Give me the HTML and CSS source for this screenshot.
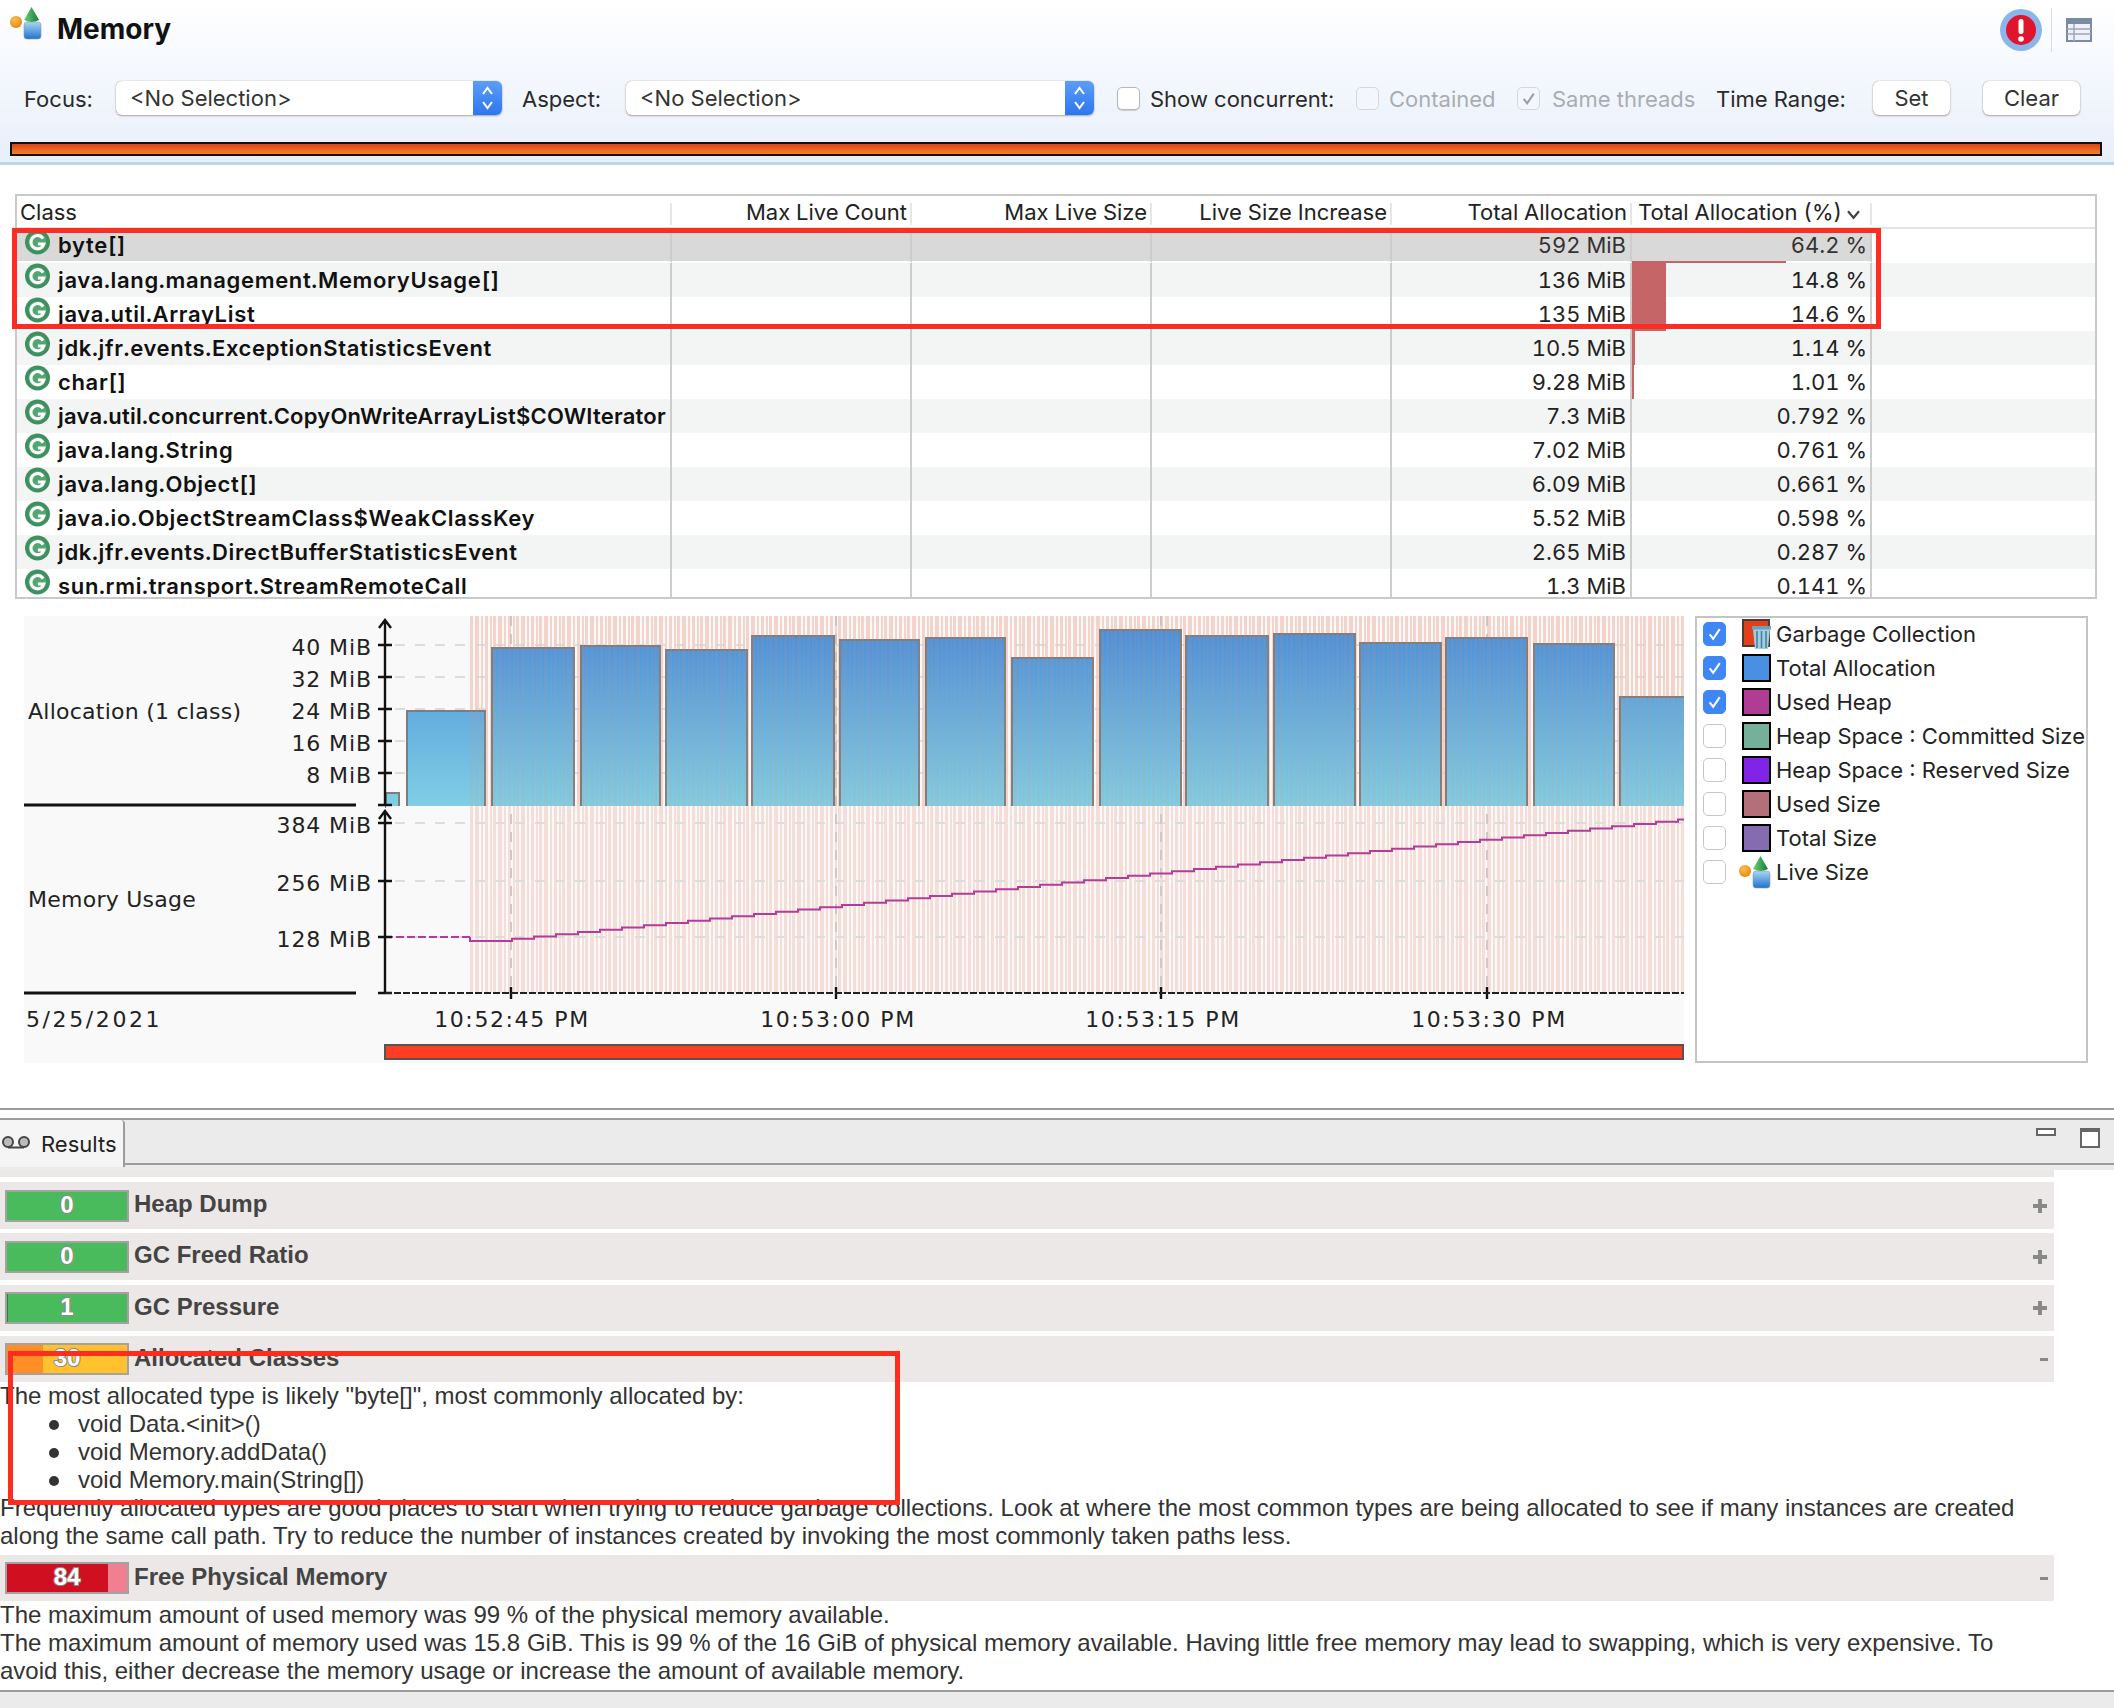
FILE: index.html
```html
<!DOCTYPE html>
<html lang="en">
<head>
    <meta charset="UTF-8">
    <title>Memory</title>
    <link rel="stylesheet" href="styles.css">
</head>
<body>
<svg class="defs" width="0" height="0">
    <defs>
        <radialGradient id="ball" cx="40%" cy="35%" r="70%"><stop offset="0" stop-color="#ffc24a"/><stop offset="1" stop-color="#e8820f"/></radialGradient>
        <linearGradient id="cup" x1="0" y1="0" x2="0" y2="1"><stop offset="0" stop-color="#a9d6f5"/><stop offset="1" stop-color="#1f73cf"/></linearGradient>
        <linearGradient id="cone" x1="0" y1="0" x2="1" y2="0"><stop offset="0" stop-color="#6fd07a"/><stop offset="1" stop-color="#137a3a"/></linearGradient>
        <symbol id="memIcon" viewBox="0 0 34 34">
            <circle cx="7" cy="16" r="6" fill="url(#ball)"/>
            <rect x="15" y="16" width="17" height="17" rx="3" fill="url(#cup)" stroke="#8a9aa8" stroke-width=".6"/>
            <path d="M22.500 1 L30 14 Q22.500 18 15 14 Z" fill="url(#cone)"/>
        </symbol>
        <symbol id="classIcon" viewBox="0 0 26 26">
            <circle cx="13" cy="13" r="12.500" fill="#3f9060"/>
            <circle cx="13" cy="13" r="9" fill="#52a672"/>
            <path d="M18.600 9.600 A6.600 6.600 0 1 0 19.400 15 L13.400 15" fill="none" stroke="#fff" stroke-width="3"/>
        </symbol>
        <symbol id="check" viewBox="0 0 24 24">
            <path d="M6.500 12.500 L10.500 17.500 L18 6.500" fill="none" stroke="currentColor" stroke-width="2.400"/>
        </symbol>
        <symbol id="stepper" viewBox="0 0 29 34">
            <path d="M10 13 L14.500 7 L19 13 M10 21 L14.500 27 L19 21" fill="none" stroke="#fff" stroke-width="2"/>
        </symbol>
    </defs>
</svg>

<div class="page">
    <header class="header">
        <div class="title-row">
            <svg class="title-icon"><use href="#memIcon"/></svg>
            <h1 class="title">Memory</h1>
            <svg class="alert-icon" viewBox="0 0 44 44">
                <circle cx="22" cy="22" r="21" fill="#8ab6ec"/>
                <circle cx="22" cy="22" r="15" fill="#e0142c"/>
                <rect x="19.500" y="11" width="5" height="15" rx="2.500" fill="#fff"/>
                <circle cx="22" cy="31" r="2.800" fill="#fff"/>
            </svg>
            <span class="title-sep"></span>
            <svg class="table-icon" viewBox="0 0 26 24">
                <rect x="1" y="1" width="24" height="22" fill="#eef1f6" stroke="#7a8aa5" stroke-width="2"/>
                <rect x="1" y="1" width="24" height="5" fill="#7a8aa5"/>
                <path d="M1 11h24M1 16h24M8 6v17" stroke="#9aa7bd" stroke-width="1.500"/>
            </svg>
        </div>
        <div class="filter-row">
            <span class="lbl lbl-focus">Focus:</span>
            <div class="combo combo-focus"><span>&lt;No Selection&gt;</span><svg class="combo-step"><use href="#stepper"/></svg></div>
            <span class="lbl lbl-aspect">Aspect:</span>
            <div class="combo combo-aspect"><span>&lt;No Selection&gt;</span><svg class="combo-step"><use href="#stepper"/></svg></div>
            <span class="box box-show"></span>
            <span class="lbl lbl-show">Show concurrent:</span>
            <span class="box box-off"></span>
            <span class="lbl lbl-off lbl-contained">Contained</span>
            <span class="box box-off box-same"><svg><use href="#check"/></svg></span>
            <span class="lbl lbl-off lbl-same">Same threads</span>
            <span class="lbl lbl-time">Time Range:</span>
            <button class="btn btn-set">Set</button>
            <button class="btn btn-clear">Clear</button>
        </div>
        <div class="flame"></div>
    </header>

    <div class="table-wrap">
        <table class="grid">
            <thead>
                <tr>
                    <th class="col-class">Class</th>
                    <th>Max Live Count</th>
                    <th>Max Live Size</th>
                    <th>Live Size Increase</th>
                    <th>Total Allocation</th>
                    <th class="col-pct">Total Allocation (%)<svg class="sort" viewBox="0 0 14 10"><path d="M2 2 L7 8 L12 2" fill="none" stroke="#444" stroke-width="2"/></svg></th>
                    <th class="col-rest"></th>
                </tr>
            </thead>
            <tbody>
                <tr class="sel"><td class="cls"><svg class="g"><use href="#classIcon"/></svg>byte[]</td><td></td><td></td><td></td><td class="num">592 MiB</td><td class="num pct"><i class="bar bar-thin" style="width:154px"></i>64.2 %</td><td></td></tr>
                <tr class="odd"><td class="cls"><svg class="g"><use href="#classIcon"/></svg>java.lang.management.MemoryUsage[]</td><td></td><td></td><td></td><td class="num">136 MiB</td><td class="num pct"><i class="bar" style="width:34px"></i>14.8 %</td><td></td></tr>
                <tr><td class="cls"><svg class="g"><use href="#classIcon"/></svg>java.util.ArrayList</td><td></td><td></td><td></td><td class="num">135 MiB</td><td class="num pct"><i class="bar" style="width:34px"></i>14.6 %</td><td></td></tr>
                <tr class="odd"><td class="cls"><svg class="g"><use href="#classIcon"/></svg>jdk.jfr.events.ExceptionStatisticsEvent</td><td></td><td></td><td></td><td class="num">10.5 MiB</td><td class="num pct"><i class="bar" style="width:3px"></i>1.14 %</td><td></td></tr>
                <tr><td class="cls"><svg class="g"><use href="#classIcon"/></svg>char[]</td><td></td><td></td><td></td><td class="num">9.28 MiB</td><td class="num pct"><i class="bar" style="width:2px"></i>1.01 %</td><td></td></tr>
                <tr class="odd"><td class="cls cls-fit"><svg class="g"><use href="#classIcon"/></svg>java.util.concurrent.CopyOnWriteArrayList$COWIterator</td><td></td><td></td><td></td><td class="num">7.3 MiB</td><td class="num pct">0.792 %</td><td></td></tr>
                <tr><td class="cls"><svg class="g"><use href="#classIcon"/></svg>java.lang.String</td><td></td><td></td><td></td><td class="num">7.02 MiB</td><td class="num pct">0.761 %</td><td></td></tr>
                <tr class="odd"><td class="cls"><svg class="g"><use href="#classIcon"/></svg>java.lang.Object[]</td><td></td><td></td><td></td><td class="num">6.09 MiB</td><td class="num pct">0.661 %</td><td></td></tr>
                <tr><td class="cls"><svg class="g"><use href="#classIcon"/></svg>java.io.ObjectStreamClass$WeakClassKey</td><td></td><td></td><td></td><td class="num">5.52 MiB</td><td class="num pct">0.598 %</td><td></td></tr>
                <tr class="odd"><td class="cls"><svg class="g"><use href="#classIcon"/></svg>jdk.jfr.events.DirectBufferStatisticsEvent</td><td></td><td></td><td></td><td class="num">2.65 MiB</td><td class="num pct">0.287 %</td><td></td></tr>
                <tr><td class="cls"><svg class="g"><use href="#classIcon"/></svg>sun.rmi.transport.StreamRemoteCall</td><td></td><td></td><td></td><td class="num">1.3 MiB</td><td class="num pct">0.141 %</td><td></td></tr>
            </tbody>
        </table>
    </div>

    <div class="chart-row">
        <svg class="chart" viewBox="24 616 1660 447" width="1660" height="447">
            <defs>
                <linearGradient id="barFill" gradientUnits="userSpaceOnUse" x1="0" y1="630" x2="0" y2="806">
                    <stop offset="0" stop-color="#4a90da"/>
                    <stop offset="1" stop-color="#80cee4"/>
                </linearGradient>
                <pattern id="gcStripes" patternUnits="userSpaceOnUse" x="470" y="0" width="23" height="10">
                    <rect x="0" width="3" height="10"/>
                    <rect x="5" width="4" height="10"/>
                    <rect x="11" width="2" height="10"/>
                    <rect x="15" width="3" height="10"/>
                    <rect x="20" width="2" height="10"/>
                </pattern>
            </defs>
            <rect class="chart-bg" x="24" y="616" width="1660" height="447"/>
            <rect class="stripes" x="470" y="616" width="1214" height="377"/>

            <g class="grid-h">
                <path d="M395 645H1684M395 677H1684M395 709H1684M395 741H1684M395 773H1684"/>
                <path d="M395 823H1684M395 881H1684M395 937H1684"/>
            </g>
            <path class="grid-v" d="M511 616V993M836 616V993M1161 616V993M1487 616V993"/>

            <g class="bars">
                <rect x="386" y="793" width="13" height="14"/>
                <rect x="407" y="711" width="78" height="96"/>
                <rect x="492" y="648" width="82" height="159"/>
                <rect x="581" y="646" width="79" height="161"/>
                <rect x="666" y="650" width="81" height="157"/>
                <rect x="752" y="636" width="82" height="171"/>
                <rect x="840" y="640" width="79" height="167"/>
                <rect x="926" y="638" width="79" height="169"/>
                <rect x="1012" y="658" width="81" height="149"/>
                <rect x="1100" y="630" width="81" height="177"/>
                <rect x="1186" y="636" width="82" height="171"/>
                <rect x="1274" y="634" width="81" height="173"/>
                <rect x="1360" y="643" width="81" height="164"/>
                <rect x="1446" y="638" width="81" height="169"/>
                <rect x="1534" y="644" width="80" height="163"/>
                <rect x="1620" y="697" width="66" height="110"/>
            </g>
            <!-- cover the bars' bottom edge, the lower plot starts here -->
            <rect class="chart-bg" x="386" y="806" width="1298" height="3"/>
            <rect class="stripes" x="470" y="806" width="1214" height="3"/>
            <rect class="stripes stripes-over" x="470" y="616" width="1214" height="190"/>

            <path class="used-dash" d="M385 937H470"/>
            <path class="used-line" d="M470 937v4h20h22v-2.250v3v-3h22v-2.250v3v-3h22v-2.250v3v-3h22v-2.250v3v-3h22v-2.250v3v-3h22v-2.250v3v-3h22v-2.250v3v-3h22v-2.250v3v-3h22v-2.250v3v-3h22v-2.250v3v-3h22v-2.250v3v-3h22v-2.250v3v-3h22v-2.250v3v-3h22v-2.250v3v-3h22v-2.250v3v-3h22v-2.250v3v-3h22v-2.250v3v-3h22v-2.250v3v-3h22v-2.250v3v-3h22v-2.250v3v-3h22v-2.250v3v-3h22v-2.250v3v-3h22v-2.250v3v-3h22v-2.250v3v-3h22v-2.250v3v-3h22v-2.250v3v-3h22v-2.250v3v-3h22v-2.250v3v-3h22v-2.250v3v-3h22v-2.250v3v-3h22v-2.250v3v-3h22v-2.250v3v-3h22v-2.250v3v-3h22v-2.250v3v-3h22v-2.250v3v-3h22v-2.250v3v-3h22v-2.250v3v-3h22v-2.250v3v-3h22v-2.250v3v-3h22v-2.250v3v-3h22v-2.250v3v-3h22v-2.250v3v-3h22v-2.250v3v-3h22v-2.250v3v-3h22v-2.250v3v-3h22v-2.250v3v-3h22v-2.250v3v-3h22v-2.250v3v-3h22v-2.250v3v-3h22v-2.250v3v-3h22v-2.250v3v-3h22v-2.250v3v-3h22v-2.250v3v-3h22v-2.250h6"/>

            <path class="axis" d="M385 806V620M379 628L385 620L391 628M378 645H392M378 677H392M378 709H392M378 741H392M378 773H392M378 805H392"/>
            <path class="axis" d="M385 993V811M379 819L385 811L391 819M378 823H392M378 881H392M378 937H392M378 993H392"/>
            <path class="axis" d="M511 987V999M836 987V999M1161 987V999M1487 987V999"/>
            <path class="baseline" d="M385 993H1684"/>
            <path class="sep" d="M24 805H356M24 993H356"/>

            <g class="chart-text">
                <text x="28" y="719" class="name">Allocation (1 class)</text>
                <text x="28" y="907" class="name">Memory Usage</text>
                <text x="26" y="1027" class="date">5/25/2021</text>
                <g text-anchor="end" class="mib">
                    <text x="372" y="655">40 MiB</text>
                    <text x="372" y="687">32 MiB</text>
                    <text x="372" y="719">24 MiB</text>
                    <text x="372" y="751">16 MiB</text>
                    <text x="372" y="783">8 MiB</text>
                    <text x="372" y="833">384 MiB</text>
                    <text x="372" y="891">256 MiB</text>
                    <text x="372" y="947">128 MiB</text>
                </g>
                <g text-anchor="middle" class="time">
                    <text x="512" y="1027">10:52:45 PM</text>
                    <text x="838" y="1027">10:53:00 PM</text>
                    <text x="1163" y="1027">10:53:15 PM</text>
                    <text x="1489" y="1027">10:53:30 PM</text>
                </g>
            </g>
            <rect class="range" x="385" y="1045" width="1298" height="14"/>
        </svg>

        <aside class="legend">
            <div class="leg-item"><span class="leg-box on"><svg><use href="#check"/></svg></span>
                <svg class="leg-icon leg-gc" viewBox="0 0 30 30">
                    <rect x="1" y="1" width="26" height="26" fill="#e2401a" stroke="#4a3a38" stroke-width="2"/>
                    <path d="M11 10h17l-2 20H13Z" fill="#a6ced8"/>
                    <path d="M10 7h19v3.500H10Z" fill="#6f9fbe"/>
                    <path d="M15 12v17M19.500 12v17M24 12v17" stroke="#3c7fa8" stroke-width="1.500"/>
                </svg>Garbage Collection</div>
            <div class="leg-item"><span class="leg-box on"><svg><use href="#check"/></svg></span><span class="swatch sw-alloc"></span>Total Allocation</div>
            <div class="leg-item"><span class="leg-box on"><svg><use href="#check"/></svg></span><span class="swatch sw-heap"></span>Used Heap</div>
            <div class="leg-item"><span class="leg-box"></span><span class="swatch sw-commit"></span>Heap Space : Committed Size</div>
            <div class="leg-item"><span class="leg-box"></span><span class="swatch sw-reserved"></span>Heap Space : Reserved Size</div>
            <div class="leg-item"><span class="leg-box"></span><span class="swatch sw-usedsize"></span>Used Size</div>
            <div class="leg-item"><span class="leg-box"></span><span class="swatch sw-total"></span>Total Size</div>
            <div class="leg-item"><span class="leg-box"></span><svg class="leg-icon leg-live"><use href="#memIcon"/></svg>Live Size</div>
        </aside>
    </div>

    <section class="results">
        <div class="tabbar">
            <div class="tab">
                <svg class="tab-icon" viewBox="0 0 30 14">
                    <circle cx="7" cy="7" r="5" fill="#bbb" stroke="#444" stroke-width="2"/>
                    <circle cx="23" cy="7" r="5" fill="#bbb" stroke="#444" stroke-width="2"/>
                    <path d="M7 12.500H23" stroke="#444" stroke-width="2"/>
                </svg>
                <span>Results</span>
            </div>
            <div class="tab-tools">
                <span class="tool-min"></span>
                <span class="tool-max"></span>
            </div>
        </div>
        <div class="tab-strip"></div>
        <div class="report">
            <div class="stub"></div>
            <div class="rule rule-tall">
                <span class="score sc-green">0</span><b class="rule-name">Heap Dump</b><span class="plus"></span>
            </div>
            <div class="rule rule-tall">
                <span class="score sc-green">0</span><b class="rule-name">GC Freed Ratio</b><span class="plus"></span>
            </div>
            <div class="rule">
                <span class="score sc-green sc-one">1</span><b class="rule-name">GC Pressure</b><span class="plus"></span>
            </div>
            <div class="rule rule-open">
                <span class="score sc-orange">30</span><b class="rule-name">Allocated Classes</b><span class="minus"></span>
            </div>
            <div class="rule-text">
                The most allocated type is likely "byte[]", most commonly allocated by:
                <ul>
                    <li>void Data.&lt;init&gt;()</li>
                    <li>void Memory.addData()</li>
                    <li>void Memory.main(String[])</li>
                </ul>
                Frequently allocated types are good places to start when trying to reduce garbage collections. Look at where the most common types are being allocated to see if many instances are created along the same call path. Try to reduce the number of instances created by invoking the most commonly taken paths less.
            </div>
            <div class="rule rule-open rule-red">
                <span class="score sc-red">84</span><b class="rule-name">Free Physical Memory</b><span class="minus"></span>
            </div>
            <div class="rule-text">
                The maximum amount of used memory was 99 % of the physical memory available.<br>
                The maximum amount of memory used was 15.8 GiB. This is 99 % of the 16 GiB of physical memory available. Having little free memory may lead to swapping, which is very expensive. To avoid this, either decrease the memory usage or increase the amount of available memory.
            </div>
        </div>
    </section>
    <div class="status"></div>

    <!-- red marks drawn over the screenshot -->
    <div class="mark mark-rows"></div>
    <div class="mark mark-text"></div>
</div>
</body>
</html>
```

FILE: styles.css
```css
* {
  box-sizing: border-box;
}

body {
  margin: 0;
  background: #fff;
  font-family: "Inter", "Liberation Sans", sans-serif;
  font-size: 22px;
  color: #222;
}

.defs {
  position: absolute;
}

.page {
  position: relative;
  width: 2114px;
  height: 1708px;
  overflow: hidden;
}

/* header */
.header {
  height: 165px;
  padding-top: 8px;
  background: linear-gradient(#fff, #e8effb);
  border-bottom: 3px solid #bcd5f1;
}

.title-row {
  display: flex;
  align-items: center;
  height: 44px;
  padding-left: 9px;
}

.title-icon {
  flex: none;
  align-self: flex-start;
  width: 34px;
  height: 34px;
  margin-top: -2px;
}

.title {
  margin: 0 0 2px 14px;
  font-size: 28px;
  font-weight: 700;
  color: #111;
}

.alert-icon {
  width: 44px;
  height: 44px;
  margin-left: auto;
}

.title-sep {
  width: 1px;
  height: 44px;
  margin-left: 8px;
  background: #d5dce8;
}

.table-icon {
  width: 26px;
  height: 24px;
  margin: 0 22px 0 14px;
}

.filter-row {
  display: flex;
  align-items: center;
  height: 34px;
  margin-top: 29px;
  padding-left: 24px;
}

.lbl {
  color: #2a2a2a;
  white-space: nowrap;
  padding-top: 2px;
}

.lbl-off {
  color: #a9adb3;
}

.lbl-focus { width: 92px; }
.lbl-aspect { width: 104px; margin-left: 20px; }
.lbl-show { width: 206px; margin-left: 10px; }
.lbl-contained { width: 128px; margin-left: 10px; }
.lbl-same { width: 164px; margin-left: 12px; }
.lbl-time { width: 157px; }

.combo {
  position: relative;
  display: flex;
  align-items: center;
  height: 34px;
  padding-left: 14px;
  background: #fff;
  border-radius: 6px;
  box-shadow: 0 0 1px #888, 0 1px 2px #aaa;
  color: #333;
}

.combo-focus { width: 386px; }
.combo-aspect { width: 468px; margin-right: 23px; }

.combo-step {
  position: absolute;
  right: 0;
  top: 0;
  width: 29px;
  height: 34px;
  background: linear-gradient(#5c9ef8, #2c76ee);
  border-radius: 0 6px 6px 0;
}

.box {
  flex: none;
  width: 23px;
  height: 23px;
  background: #fff;
  border: 1px solid #b4b8bd;
  border-radius: 5px;
  box-shadow: 0 1px 1px #ccc;
}

.box-off {
  background: #f3f6fb;
  border-color: #d4d8dd;
  box-shadow: none;
}

.box-same svg {
  display: block;
  width: 21px;
  height: 21px;
  color: #9a9ea4;
}

.btn {
  height: 34px;
  padding: 0;
  background: #fff;
  border: none;
  border-radius: 6px;
  box-shadow: 0 0 1px #888, 0 1px 2px #aaa;
  font: inherit;
  color: #333;
}

.btn-set { width: 77px; }
.btn-clear { width: 97px; margin-left: 33px; }

.flame {
  height: 14px;
  width: 2092px;
  margin: 27px 0 0 10px;
  background: linear-gradient(#d8431f, #f58320);
  border: 2px solid #111;
}

/* class table */
.table-wrap {
  width: 2082px;
  height: 405px;
  margin: 29px 0 0 15px;
  border: 2px solid #c9c9c9;
  overflow: hidden;
}

.grid {
  width: 2078px;
  table-layout: fixed;
  border-collapse: separate;
  border-spacing: 0;
  font-variant-numeric: tabular-nums;
}

.grid th {
  width: 240px;
  height: 33px;
  padding: 0 5px 0 0;
  border-bottom: 2px solid #e3e3e3;
  font-weight: 400;
  text-align: right;
  white-space: nowrap;
  color: #222;
  background: linear-gradient(#e6e6e6, #e6e6e6) right 7px / 2px 22px no-repeat;
}

.grid th.col-class {
  width: 655px;
  padding-left: 3px;
  text-align: left;
}

.grid th.col-pct {
  padding-left: 6px;
  text-align: left;
}

.grid th.col-rest {
  width: auto;
  background: none;
}

.sort {
  width: 17px;
  height: 11px;
  margin-left: 3px;
}

.grid td {
  position: relative;
  height: 34px;
  padding: 0 4px 0 0;
  border-right: 2px solid #cdcdcd;
  white-space: nowrap;
}

.grid td:last-child {
  border-right: none;
}

.grid .odd td {
  background: #f3f5f4;
}

.grid .sel td {
  background: #d9d9d9;
  border-bottom: 2px solid #fff;
}

.grid .sel td:last-child {
  background: #fff;
}

.cls {
  padding-left: 41px !important;
  font-weight: 600;
  letter-spacing: .66px;
  color: #111;
}

.cls-fit {
  letter-spacing: .21px;
}

.num {
  text-align: right;
  color: #222;
}

.grid .pct {
  padding-right: 3px;
}

.sel .num {
  color: #333;
}

.g {
  position: absolute;
  left: 7px;
  top: 0;
  width: 27px;
  height: 26px;
}

.bar {
  position: absolute;
  left: 0;
  top: 0;
  bottom: 0;
  background: #c56568;
}

.bar-thin {
  top: auto;
  bottom: -2px;
  height: 2px;
}

/* chart */
.chart-row {
  display: flex;
  margin: 17px 0 0 24px;
}

.chart {
  flex: none;
  display: block;
}

.chart-bg { fill: #f9f9f9; }

.grid-h path {
  fill: none;
  stroke: #ddd;
  stroke-width: 2;
  stroke-dasharray: 10 10;
}

.grid-v {
  fill: none;
  stroke: #cfc8c6;
  stroke-width: 2;
  stroke-dasharray: 10 8;
}

.bars rect {
  fill: url(#barFill);
  stroke: #7f7c7b;
  stroke-width: 2;
}

.stripes {
  fill: url(#gcStripes);
}

.stripes-over {
  opacity: .5;
}

#gcStripes rect {
  fill: #eb8a6c;
  fill-opacity: .24;
}

.used-dash {
  fill: none;
  stroke: #b23c98;
  stroke-width: 2;
  stroke-dasharray: 8 3;
}

.used-line {
  fill: none;
  stroke: #b23c98;
  stroke-width: 2;
}

.axis {
  fill: none;
  stroke: #111;
  stroke-width: 2.400;
}

.baseline {
  fill: none;
  stroke: #222;
  stroke-width: 2;
  stroke-dasharray: 7 2;
}

.sep {
  fill: none;
  stroke: #111;
  stroke-width: 3;
}

.chart-text text {
  font-family: "DejaVu Sans", sans-serif;
  font-size: 22px;
  fill: #222;
}

.chart-text .name { letter-spacing: .25px; }
.chart-text .date { letter-spacing: 2.600px; }
.chart-text .mib text { letter-spacing: .9px; }
.chart-text .time text { letter-spacing: 1.600px; }

.range {
  fill: #ff3d23;
  stroke: #555;
  stroke-width: 2;
}

.legend {
  flex: none;
  width: 393px;
  height: 447px;
  margin-left: 11px;
  padding: 0 0 0 6px;
  border: 2px solid #c4c4c4;
}

.leg-item {
  display: flex;
  align-items: center;
  height: 34px;
  white-space: nowrap;
  color: #222;
}

.leg-item:first-child {
  margin-top: -1px;
}

.leg-box {
  flex: none;
  width: 23px;
  height: 24px;
  margin-right: 16px;
  background: #fff;
  border: 1px solid #c4c6c9;
  border-radius: 5px;
}

.leg-box.on {
  background: #3f87f5;
  border-color: #3f87f5;
  color: #fff;
}

.leg-box svg {
  display: block;
  width: 21px;
  height: 22px;
}

.leg-icon {
  flex: none;
  overflow: visible;
}

.leg-gc {
  width: 30px;
  height: 30px;
  margin-right: 4px;
}

.leg-live {
  width: 34px;
  height: 34px;
  margin: 0 4px 0 -4px;
}

.swatch {
  flex: none;
  width: 29px;
  height: 28px;
  margin-right: 5px;
  border: 2px solid #000;
}

.sw-alloc { background: #4a90e2; }
.sw-heap { background: #b03c96; }
.sw-commit { background: #74b09a; }
.sw-reserved { background: #8224e8; }
.sw-usedsize { background: #b4707a; }
.sw-total { background: #856cb0; }

/* results view */
.results {
  height: 582px;
  margin-top: 45px;
  border-top: 2px solid #9c9c9c;
  font-family: "Liberation Sans", sans-serif;
}

.tabbar {
  display: flex;
  height: 49px;
  margin-top: 8px;
  background: #ebebeb;
  border-top: 2px solid #9c9c9c;
}

.tab {
  display: flex;
  align-items: center;
  width: 125px;
  height: 47px;
  background: #f5f5f5;
  border-right: 2px solid #9c9c9c;
  border-top-right-radius: 4px;
  font-family: "Inter", sans-serif;
  color: #222;
}

.tab-icon {
  width: 30px;
  height: 14px;
  margin: 0 10px 4px 1px;
}

.tab-tools {
  flex: 1;
  display: flex;
  align-items: flex-start;
  justify-content: flex-end;
  height: 45px;
  padding: 8px 14px 0 0;
  border-bottom: 2px solid #9c9c9c;
}

.tool-min {
  width: 20px;
  height: 8px;
  background: #fff;
  border: 2px solid #666;
}

.tool-max {
  width: 20px;
  height: 20px;
  margin-left: 24px;
  background: #fff;
  border: 2px solid #666;
  border-top-width: 4px;
}

.tab-strip {
  height: 3px;
  background: #ebebeb;
}

.report {
  width: 2054px;
  color: #333;
  font-size: 24px;
  line-height: 28px;
}

.stub {
  height: 7px;
  margin-bottom: 5px;
  background: #ece8e7;
}

.rule {
  display: flex;
  align-items: center;
  height: 46px;
  margin-bottom: 5px;
  padding-left: 5px;
  background: #ece8e7;
}

.rule-tall {
  height: 47px;
}

.rule-tall + .rule-tall {
  margin-bottom: 5px;
}

.rule-tall:nth-child(2) {
  margin-bottom: 4px;
}

.rule-open {
  margin-bottom: 0;
}

.rule-red {
  margin-top: 5px;
}

.score {
  flex: none;
  width: 124px;
  height: 32px;
  border: 2px solid #a2a2a2;
  text-align: center;
  line-height: 26px;
  font-weight: 700;
  color: #fff;
  -webkit-text-stroke: 2px #8a8a8a;
  paint-order: stroke fill;
}

.sc-green { background: #4abb5c; }
.sc-one { box-shadow: inset 1px 0 #2f7d40; }
.sc-orange { background: linear-gradient(90deg, #ff8e26 36px, #ffc12e 36px); }
.sc-red { background: linear-gradient(90deg, #d01020 101px, #f07f92 101px); }

.rule-name {
  margin-left: 5px;
  padding-bottom: 3px;
  color: #444;
}

.plus,
.minus {
  width: 14px;
  height: 14px;
  margin-left: auto;
  margin-right: 7px;
  background: linear-gradient(#888, #888) center / 14px 4px no-repeat;
}

.plus {
  background:
    linear-gradient(#888, #888) center / 14px 4px no-repeat,
    linear-gradient(#888, #888) center / 4px 14px no-repeat;
}

.minus {
  width: 8px;
  margin-right: 6px;
  background-size: 8px 3px;
}

.rule-text ul {
  margin: 0;
  padding-left: 78px;
  list-style: none;
}

.rule-text li {
  position: relative;
}

.rule-text li::before {
  content: "";
  position: absolute;
  left: -29px;
  top: 10px;
  width: 10px;
  height: 10px;
  border-radius: 50%;
  background: #333;
}

.status {
  height: 18px;
  background: #ebebeb;
  border-top: 2px solid #9c9c9c;
}

/* annotations */
.mark {
  position: absolute;
  border: 5px solid #ff2d20;
}

.mark-rows {
  left: 12px;
  top: 228px;
  width: 1869px;
  height: 101px;
}

.mark-text {
  left: 8px;
  top: 1351px;
  width: 892px;
  height: 154px;
}
```
